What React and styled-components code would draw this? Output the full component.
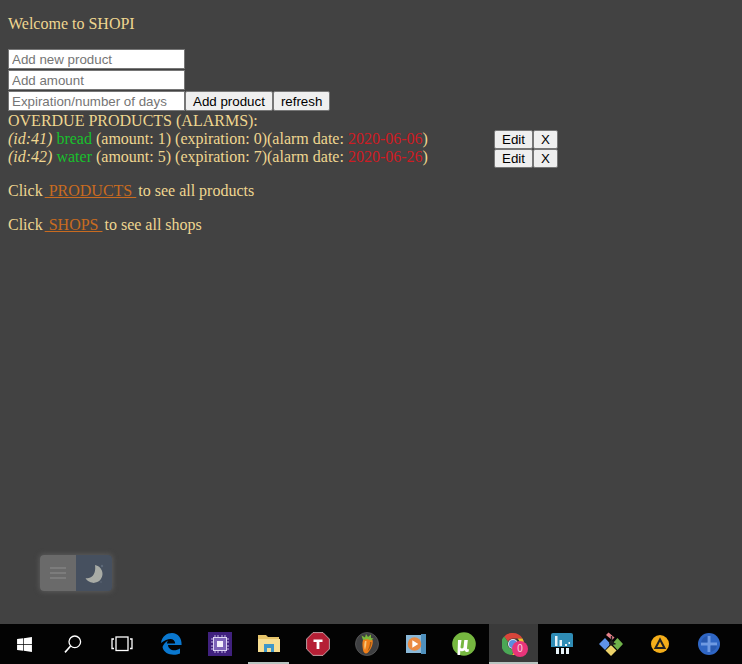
import React from 'react';
import styled, { createGlobalStyle } from 'styled-components';
import { FaWindows } from 'react-icons/fa';

const GlobalStyle = createGlobalStyle`
  html, body {
    margin: 0;
    padding: 0;
    background: #424242;
  }
`;

const Page = styled.div`
  display: flex;
  flex-direction: column;
  height: 664px;
  overflow: hidden;
  position: relative;
  font-family: 'Liberation Serif', 'Times New Roman', serif;
  font-size: 16px;
  color: #efd690;
`;

const Main = styled.main`
  flex: 1;
  padding: 15px 8px 0;
`;

const Paragraph = styled.p`
  margin: 0 0 16px;
  line-height: 18px;
`;

const Form = styled.form`
  display: flex;
  flex-direction: column;
  gap: 1px;
  margin: 16px 0 1px;
`;

const FormRow = styled.div`
  display: flex;
  height: 20px;
  align-items: flex-start;
`;

const Input = styled.input`
  box-sizing: border-box;
  width: 177px;
  height: 20px;
  margin: 0;
  padding: 1px 3px;
  border: 1px solid #767676;
  border-radius: 0;
  background: #fff;
  font-family: 'Liberation Sans', Arial, sans-serif;
  font-size: 13.33px;
  &::placeholder {
    color: #757575;
    opacity: 1;
  }
`;

const Button = styled.button`
  box-sizing: border-box;
  height: ${(props) => props.$height || 20}px;
  margin: 0;
  padding: 1px 7px;
  border: 1px solid #767676;
  border-radius: 2px;
  background: #efefef;
  color: #000;
  font-family: 'Liberation Sans', Arial, sans-serif;
  font-size: 13.33px;
`;

const AlarmTitle = styled.div`
  line-height: 18px;
`;

const AlarmRow = styled.div`
  display: flex;
  height: 18px;
  line-height: 18px;
`;

const AlarmText = styled.div`
  width: 486px;
  flex: none;
  white-space: nowrap;
`;

const AlarmButtons = styled.div`
  display: flex;
  height: 18px;
  align-items: flex-start;
  ${AlarmRow} + ${AlarmRow} & {
    margin-top: 1px;
  }
`;

const ProductName = styled.span`
  color: #18c02c;
`;

const AlarmDate = styled.span`
  color: #cf1b22;
`;

const Alarms = styled.div`
  margin-bottom: 16px;
`;

const NavLink = styled.a`
  margin: 0 2px;
  color: #c96b20;
  text-decoration: underline;
`;

const ThemeToggle = styled.div`
  position: absolute;
  left: 40px;
  top: 555px;
  width: 72px;
  height: 36px;
  display: flex;
  border-radius: 4px;
  overflow: hidden;
  box-shadow: 0 0 5px 1px #5a5a5a;
`;

const ToggleSide = styled.div`
  flex: 1;
  display: flex;
  align-items: center;
  justify-content: center;
  background: ${(props) => (props.$dark ? '#46505f' : '#6a6a6a')};
`;

const Taskbar = styled.footer`
  flex: none;
  height: 40px;
  display: flex;
  background: #030303;
`;

const TaskItem = styled.div`
  position: relative;
  flex: none;
  width: 48.9px;
  height: 40px;
  display: flex;
  align-items: center;
  justify-content: center;
  color: #fff;
  background: ${(props) => (props.$active ? '#3a3a3a' : 'transparent')};
  &::after {
    content: '';
    display: ${(props) => (props.$open ? 'block' : 'none')};
    position: absolute;
    left: ${(props) => (props.$active ? 0 : '4px')};
    right: ${(props) => (props.$active ? 0 : '4px')};
    bottom: 0;
    height: 2px;
    background: #b7c4c0;
  }
`;

const Badge = styled.span`
  position: absolute;
  left: 23px;
  top: 17px;
  width: 16px;
  height: 16px;
  border-radius: 50%;
  background: #e8347a;
  color: #f6d9e4;
  font-family: 'Liberation Sans', Arial, sans-serif;
  font-size: 10px;
  line-height: 16px;
  text-align: center;
`;

const SearchIcon = () => (
  <svg width="20" height="20" viewBox="0 0 20 20" fill="none" stroke="#fff" strokeWidth="1.3">
    <circle cx="11.8" cy="7.8" r="5.8" />
    <path d="M7.6 12 2 18.4" strokeWidth="1.6" />
  </svg>
);

const TaskViewIcon = () => (
  <svg width="22" height="16" viewBox="0 0 22 16" fill="none" stroke="#fff" strokeWidth="1.3">
    <rect x="5" y="1" width="12" height="13.5" />
    <path d="M3 3H1v9.5h2M19 3h2v9.5h-2" />
  </svg>
);

const EdgeIcon = () => (
  <svg width="22" height="24" viewBox="0 0 22 24">
    <path
      fill="#0a78d0"
      d="M1 11C2 4 7 1 12 1c6 0 10 5 9.600 12H8c.3 5 6.500 7 12 3.500v5C14 24 4 23 2.500 15c1-3 3-5 5.500-6.500-.6 1-1 2-1.100 3h8.300C15 6 8.500 5 1 11Z"
    />
  </svg>
);

const ChipIcon = () => (
  <svg width="24" height="24" viewBox="0 0 24 24">
    <rect width="24" height="24" fill="#40217e" />
    <path
      stroke="#c3b6e6"
      strokeWidth="1"
      d="M7 3v18M10 3v18M14 3v18M17 3v18M3 7h18M3 10h18M3 14h18M3 17h18"
    />
    <rect x="5.500" y="5.500" width="13" height="13" fill="#7c63b8" stroke="#ddd5f2" />
    <rect x="9" y="9" width="6" height="6" fill="#f2eefb" />
  </svg>
);

const FolderIcon = () => (
  <svg width="22" height="20" viewBox="0 0 22 20">
    <path fill="#e6c46a" d="M0 1h8l2 2h11v3H0Z" />
    <path fill="#f7de92" d="M0 5h22v13H0Z" />
    <path fill="#3e97c9" d="M6 10h10v8h-3v-4H9v4H6Z" />
  </svg>
);

const StopIcon = () => (
  <svg width="24" height="24" viewBox="0 0 24 24">
    <path fill="#b51f35" stroke="#e8dcdc" strokeWidth="0.7" d="M7 .6h10L23.400 7v10L17 23.400H7L.6 17V7Z" />
    <path fill="#fff" d="M7.500 7.500h9v2.600h-3.100V17h-2.800v-6.900H7.500Z" />
  </svg>
);

const FruityIcon = () => (
  <svg width="24" height="24" viewBox="0 0 24 24">
    <circle cx="12" cy="12" r="11.500" fill="#3f4042" stroke="#5c5c5c" strokeWidth="0.8" />
    <path fill="#ef7f1a" d="M8 8c3-2 8-2 9.500 0 1 3-1 9-5 13-2 1-4 0-4.500-3C7.500 14 7 11 8 8Z" />
    <path fill="#fbc77a" d="M10 9c-1 3-1 7 0 9 1-3 1.500-6 1.500-9Z" />
    <path fill="#9c5a18" d="M15 10c0 3-1 6-2.500 9 2-1 4-5 4-9Z" />
    <path fill="#7dbb3a" d="M8 8 6.500 3.500l3.500 2L11 2l2 3 3-2.500V6l2.500.5L16 8.500c-3-1.500-5-1.500-8-.5Z" />
  </svg>
);

const PlayerIcon = () => (
  <svg width="20" height="20" viewBox="0 0 20 20">
    <path fill="#8ab8d8" d="M0 1h15v18H0Z" />
    <path fill="#4f90bd" d="M15 0h5v20h-5Z" />
    <circle cx="8.500" cy="10" r="6.800" fill="#ea8a42" />
    <path fill="#fff" d="M6.300 6.200v7.600l6-3.800Z" />
  </svg>
);

const TorrentIcon = () => (
  <svg width="24" height="24" viewBox="0 0 24 24">
    <circle cx="12" cy="12" r="11.800" fill="#76b740" />
    <path fill="#fff" d="M6 8h3.500L8.500 15c-.2 1.500 2 2 3 .5l.8-7.500h3.500L15 16c-.1 1 .6 1.500 2 1.200l-.4 2.600c-2 .4-3.600 0-4-1.600-1.400 1.400-3 1.400-4.200.6L8 23H5.500Z" />
  </svg>
);

const ChromeIcon = () => (
  <svg width="22" height="22" viewBox="0 0 22 22">
    <path fill="#d9453a" d="M11 0a11 11 0 0 1 9.500 5.500H11a5.500 5.500 0 0 0-5 3.200L2.200 3.400A11 11 0 0 1 11 0Z" />
    <path fill="#f3c02f" d="M20.500 5.500A11 11 0 0 1 10 22l5.700-8.200a5.500 5.500 0 0 0-.2-8.300Z" />
    <path fill="#4aa755" d="M2.200 3.400 6 8.700a5.500 5.500 0 0 0 6 7.700L10 22A11 11 0 0 1 2.200 3.400Z" />
    <circle cx="11" cy="11" r="5" fill="#e8e8e8" />
    <circle cx="11" cy="11" r="4" fill="#5b8de0" />
  </svg>
);

const StatsIcon = () => (
  <svg width="22" height="22" viewBox="0 0 22 22">
    <path fill="#2f8cb5" d="M2 0h18a2 2 0 0 1 2 2v12H0V2a2 2 0 0 1 2-2Z" />
    <path fill="#e8f3f8" d="M4 3h2.500v10H4ZM8.500 7H11v6H8.500ZM14 11h2v2h-2ZM17.500 9h1.500v2h-1.500ZM5 15h3v6H5ZM10 15h3v6h-3ZM15 15h3v6h-3Z" />
  </svg>
);

const DiamondIcon = () => (
  <svg width="24" height="24" viewBox="0 0 24 24">
    <path fill="#5f93e8" d="M0 12 6 6l5.500 6L6 18Z" />
    <path fill="#6fb24a" d="m13 12 5.500-6 5.500 6-5.500 6Z" />
    <path fill="#eed36a" d="m12 13 5.500 5.500L12 24l-5.500-5.500Z" />
    <path fill="#e4808a" d="m7 3 2.500-2.500 6 5-2.500 2.500Z" />
    <circle cx="12.500" cy="11" r="2.500" fill="#1d1d1d" />
    <path stroke="#1d1d1d" strokeWidth="1.400" d="M12.500 11V4M12.500 11l4 1" />
  </svg>
);

const AimpIcon = () => (
  <svg width="18" height="18" viewBox="0 0 18 18">
    <circle cx="9" cy="9" r="9" fill="#f4ae1a" />
    <path fill="none" stroke="#222" strokeWidth="2" d="M9 4.500 4.500 13h9Z" />
  </svg>
);

const RemoteIcon = () => (
  <svg width="22" height="22" viewBox="0 0 22 22">
    <circle cx="11" cy="11" r="11" fill="#2f66c4" />
    <path fill="#6f9ae2" d="M9.500 3h3v6.500H19v3h-6.500V19h-3v-6.500H3v-3h6.500Z" />
    <path fill="#1f4a9a" opacity="0.5" d="M3 9.500h6.500V3A8.500 8.500 0 0 0 3 9.500ZM19 12.500h-6.500V19a8.500 8.500 0 0 0 6.500-6.500Z" />
  </svg>
);

const MoonIcon = () => (
  <svg width="24" height="24" viewBox="0 0 24 24">
    <path fill="#a9aca6" d="M13 4a9 9 0 1 1-9.500 13c5 1.500 11-3 9.500-13Z" />
    <circle cx="20" cy="5" r="1.200" fill="#5d6878" />
    <circle cx="19" cy="21" r="0.800" fill="#5d6878" />
  </svg>
);

const MenuIcon = () => (
  <svg width="18" height="14" viewBox="0 0 18 14" fill="none" stroke="#7c7c7c" strokeWidth="2">
    <path d="M1 2h16M1 7h16M1 12h16" />
  </svg>
);

const alarms = [
  { id: 41, name: 'bread', amount: 1, expiration: 0, date: '2020-06-06' },
  { id: 42, name: 'water', amount: 5, expiration: 7, date: '2020-06-26' },
];

export default function App() {
  return (
    <Page>
      <GlobalStyle />
      <Main>
        <div>Welcome to SHOPI</div>
        <Form>
          <FormRow>
            <Input placeholder="Add new product" />
          </FormRow>
          <FormRow>
            <Input placeholder="Add amount" />
          </FormRow>
          <FormRow>
            <Input placeholder="Expiration/number of days" />
            <Button type="button">Add product</Button>
            <Button type="button">refresh</Button>
          </FormRow>
        </Form>
        <Alarms>
          <AlarmTitle>OVERDUE PRODUCTS (ALARMS):</AlarmTitle>
          {alarms.map((a) => (
            <AlarmRow key={a.id}>
              <AlarmText>
                <i>(id:{a.id})</i> <ProductName>{a.name}</ProductName> (amount: {a.amount}) (expiration:{' '}
                {a.expiration})(alarm date: <AlarmDate>{a.date}</AlarmDate>)
              </AlarmText>
              <AlarmButtons>
                <Button type="button" $height={19}>
                  Edit
                </Button>
                <Button type="button" $height={19}>
                  X
                </Button>
              </AlarmButtons>
            </AlarmRow>
          ))}
        </Alarms>
        <Paragraph>
          Click<NavLink href="#"> PRODUCTS </NavLink> to see all products
        </Paragraph>
        <Paragraph>
          Click<NavLink href="#"> SHOPS </NavLink> to see all shops
        </Paragraph>
      </Main>
      <ThemeToggle>
        <ToggleSide>
          <MenuIcon />
        </ToggleSide>
        <ToggleSide $dark>
          <MoonIcon />
        </ToggleSide>
      </ThemeToggle>
      <Taskbar>
        <TaskItem>
          <FaWindows size={17} />
        </TaskItem>
        <TaskItem>
          <SearchIcon />
        </TaskItem>
        <TaskItem>
          <TaskViewIcon />
        </TaskItem>
        <TaskItem>
          <EdgeIcon />
        </TaskItem>
        <TaskItem>
          <ChipIcon />
        </TaskItem>
        <TaskItem $open>
          <FolderIcon />
        </TaskItem>
        <TaskItem>
          <StopIcon />
        </TaskItem>
        <TaskItem>
          <FruityIcon />
        </TaskItem>
        <TaskItem>
          <PlayerIcon />
        </TaskItem>
        <TaskItem>
          <TorrentIcon />
        </TaskItem>
        <TaskItem $active $open>
          <ChromeIcon />
          <Badge>0</Badge>
        </TaskItem>
        <TaskItem>
          <StatsIcon />
        </TaskItem>
        <TaskItem>
          <DiamondIcon />
        </TaskItem>
        <TaskItem>
          <AimpIcon />
        </TaskItem>
        <TaskItem>
          <RemoteIcon />
        </TaskItem>
      </Taskbar>
    </Page>
  );
}
